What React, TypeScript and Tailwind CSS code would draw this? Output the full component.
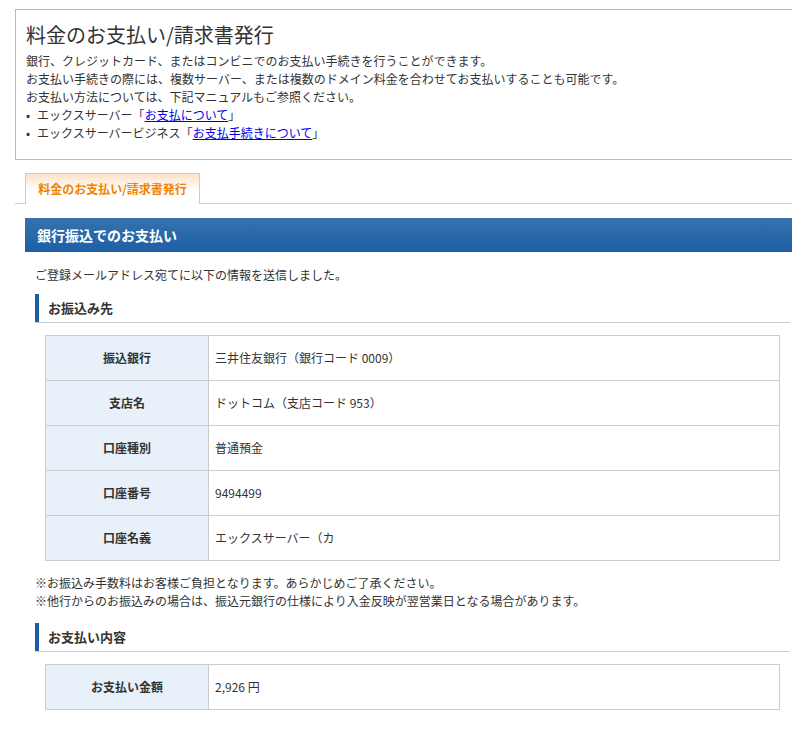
export default function App() {
  const rows: [string, string][] = [
    ["振込銀行", "三井住友銀行（銀行コード 0009）"],
    ["支店名", "ドットコム（支店コード 953）"],
    ["口座種別", "普通預金"],
    ["口座番号", "9494499"],
    ["口座名義", "エックスサーバー（カ"],
  ];

  return (
    <div
      className="w-[792px] h-[739px] overflow-hidden bg-white text-[12px] text-[#333]"
      style={{ fontFamily: '"Noto Sans CJK JP", "Noto Sans", sans-serif' }}
    >
      <div className="w-[820px] pl-[15px] pt-[9px]">
        {/* Intro box */}
        <div className="border border-[#bbb] h-[151px] px-[10px] pt-[12px]">
          <h1 className="text-[20px] leading-[26px] text-[#333] mb-[4px]">料金のお支払い/請求書発行</h1>
          <div className="leading-[18px]">
            <p>銀行、クレジットカード、またはコンビニでのお支払い手続きを行うことができます。</p>
            <p>お支払い手続きの際には、複数サーバー、または複数のドメイン料金を合わせてお支払いすることも可能です。</p>
            <p>お支払い方法については、下記マニュアルもご参照ください。</p>
            <ul>
              <li className="flex gap-[7px]">
                <span>•</span>
                <span>
                  エックスサーバー「<a className="text-[#0000ee] underline">お支払について</a>」
                </span>
              </li>
              <li className="flex gap-[7px]">
                <span>•</span>
                <span>
                  エックスサーバービジネス「<a className="text-[#0000ee] underline">お支払手続きについて</a>」
                </span>
              </li>
            </ul>
          </div>
        </div>

        {/* Tab */}
        <div className="mt-[13px] border-b border-[#ccc] h-[31px] pl-[10px]">
          <div className="w-[175px] h-[31px] border border-b-0 border-[#ccc] bg-gradient-to-b from-[#fde3c8] to-white to-60% flex items-center justify-center text-[#f08300] font-bold text-[12px]">
            料金のお支払い/請求書発行
          </div>
        </div>

        <div className="pl-[10px] pt-[14px]">
          <div className="h-[34px] bg-gradient-to-b from-[#3573ad] to-[#1d5fa6] text-white font-bold text-[14px] flex items-center pl-[12px]">
            銀行振込でのお支払い
          </div>

          <div className="px-[10px]">
            <p className="mt-[14px] leading-[18px] pl-[-2px]">ご登録メールアドレス宛てに以下の情報を送信しました。</p>

            <SubHead title="お振込み先" className="mt-[10px]" />

            <table className="mt-[12px] ml-[10px] w-[735px] border-collapse">
              <tbody>
                {rows.map(([k, v]) => (
                  <tr key={k} className="h-[45px]">
                    <th className="w-[163px] border border-[#ccc] bg-[#e8f1f9] font-bold text-center">{k}</th>
                    <td className="border border-[#ccc] pl-[6px]">{v}</td>
                  </tr>
                ))}
              </tbody>
            </table>

            <div className="mt-[13px] leading-[18px]">
              <p>※お振込み手数料はお客様ご負担となります。あらかじめご了承ください。</p>
              <p>※他行からのお振込みの場合は、振込元銀行の仕様により入金反映が翌営業日となる場合があります。</p>
            </div>

            <SubHead title="お支払い内容" className="mt-[13px]" />

            <table className="mt-[12px] ml-[10px] w-[735px] border-collapse">
              <tbody>
                <tr className="h-[45px]">
                  <th className="w-[163px] border border-[#ccc] bg-[#e8f1f9] font-bold text-center">お支払い金額</th>
                  <td className="border border-[#ccc] pl-[6px]">2,926 円</td>
                </tr>
              </tbody>
            </table>
          </div>
        </div>
      </div>
    </div>
  );
}

function SubHead({ title, className }: { title: string; className?: string }) {
  return (
    <div className={`w-[755px] h-[29px] border-b border-[#ccc] flex items-stretch ${className ?? ""}`}>
      <div className="w-[4px] bg-[#1d5fa6]" />
      <div className="flex items-center pl-[9px] font-bold text-[13px]">{title}</div>
    </div>
  );
}
